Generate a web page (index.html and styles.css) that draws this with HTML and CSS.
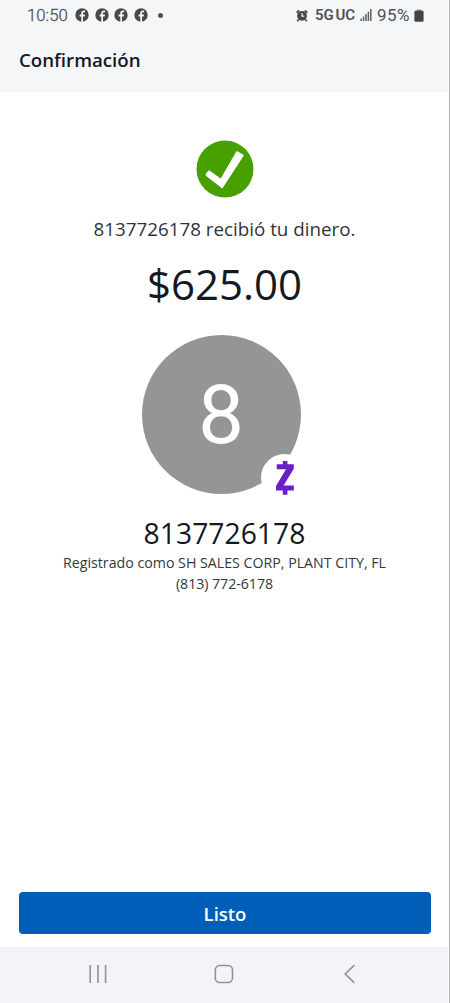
FILE: index.html
```html
<!DOCTYPE html>
<html lang="es">
<head>
<meta charset="utf-8">
<title>Confirmación</title>
<link rel="stylesheet" href="styles.css">
</head>
<body>
<svg class="defs" aria-hidden="true"><defs>
<symbol id="fb" viewBox="0 0 14 14"><circle cx="7" cy="7" r="6.7" fill="#48494b"/><path d="M6.3 14V8.5H4.6V6.5h1.7V5.2c0-1.8 1-2.7 2.6-2.7h1.2v1.8H9c-.7 0-1 .3-1 1v1.2h2L9.7 8.5H8V14z" fill="#f4f6f8"/></symbol>
</defs></svg>
<div class="screen">
  <header class="top">
    <div class="status">
      <div class="status-left">
        <span class="time">10:50</span>
        <svg class="fb"><use href="#fb"/></svg>
        <svg class="fb"><use href="#fb"/></svg>
        <svg class="fb"><use href="#fb"/></svg>
        <svg class="fb"><use href="#fb"/></svg>
        <span class="dot"></span>
      </div>
      <div class="status-right">
        <svg class="alarm" viewBox="0 0 12 13"><circle cx="6" cy="6.8" r="4.9" fill="#454648"/><path d="M.6 3.6 3.2 1.3M11.4 3.6 8.8 1.3M2.6 10.7 1.2 12.2M9.4 10.7l1.4 1.5" stroke="#454648" stroke-width="1.7"/><path d="M6 4v3.1h2.3" fill="none" stroke="#f4f6f8" stroke-width="1.2"/></svg>
        <span class="network">5G<span class="uc">UC</span></span>
        <svg class="signal" viewBox="0 0 12 12"><path d="M1.2 12V9.5M3.6 12V7.5M6 12V5M8.4 12V2.7M10.8 12V0" stroke="#606164" stroke-width="1.5"/></svg>
        <span class="percent">95%</span>
        <svg class="battery" viewBox="0 0 10 13"><path d="M3 .3h4V2H3z" fill="#a5a6a8"/><rect x=".4" y="1.5" width="9.2" height="11.2" rx="1.5" fill="#424345"/></svg>
      </div>
    </div>
    <h1 class="title">Confirmación</h1>
  </header>
  <main class="content">
    <svg class="check" viewBox="0 0 58 58"><circle cx="29" cy="29" r="28.5" fill="#489f00"/><path d="M10.6 34 13 31.2 25 39.6 41 12 47 15.4 26.2 47.4 10.6 35.4z" fill="#fff" stroke="#fff" stroke-width="1.6" stroke-linejoin="round"/></svg>
    <p class="message">8137726178 recibió tu dinero.</p>
    <p class="amount">$625.00</p>
    <div class="avatar">
      <span class="initial">8</span>
      <span class="zelle"><svg viewBox="0 0 18 34"><path d="M6.8 0h4.6v3.3h6.4v4.4L7.6 24.5h10.2v4.9h-6.4v4.3H6.8v-4.3H0v-4.3L10 8.2H.7V3.3h6.1z" fill="#6b1fc9"/></svg></span>
    </div>
    <h2 class="recipient">8137726178</h2>
    <p class="detail registered">Registrado como SH SALES CORP, PLANT CITY, FL</p>
    <p class="detail phone">(813) 772-6178</p>
  </main>
  <div class="actions"><button class="done">Listo</button></div>
  <nav class="navbar">
    <svg viewBox="0 0 20 20"><path d="M2.2 1v18M10 1v18M17.6 1v18" stroke="#929397" stroke-width="1.6"/></svg>
    <svg viewBox="0 0 20 20"><rect x="1.3" y="1.5" width="17.2" height="17" rx="4.6" fill="none" stroke="#929397" stroke-width="1.6"/></svg>
    <svg viewBox="0 0 20 20"><path d="M14.4 1.2 5.2 10l9.2 8.8" fill="none" stroke="#929397" stroke-width="1.6"/></svg>
  </nav>
</div>
</body>
</html>
```
FILE: styles.css
```css
* { box-sizing: border-box; }
body { margin: 0; font-family: "Open Sans", "Noto Sans", sans-serif; color: #14191f; background: #fff; }
h1, h2, p { margin: 0; font-weight: 400; white-space: nowrap; }
svg { display: block; flex: none; }
.defs { position: absolute; width: 0; height: 0; }
.screen { width: 450px; height: 1003px; display: flex; flex-direction: column; border-right: 1px solid #b0b1b3; overflow: hidden; }
.top { height: 92px; background: #f4f6f8; margin-right: 1px; }
.status { height: 30px; padding: 0 24px 0 27px; display: flex; justify-content: space-between; align-items: center; font-family: Roboto, sans-serif; color: #505154; }
.status-left, .status-right { display: flex; align-items: center; }
.time { width: 48px; font-size: 16.8px; line-height: 20px; font-weight: 300; -webkit-text-stroke: .3px #505154; }
.fb { width: 14px; height: 14px; margin-right: 5.5px; }
.dot { width: 5px; height: 5px; border-radius: 50%; background: #505154; margin-left: 5px; }
.alarm { width: 12px; height: 13px; margin-right: 7px; }
.network { width: 45px; font-size: 15px; font-weight: 600; line-height: 20px; letter-spacing: -.15px; }
.uc { margin-left: 2px; }
.signal { width: 12px; height: 12px; margin-right: 5px; }
.percent { width: 37px; font-size: 17px; line-height: 20px; letter-spacing: .5px; }
.battery { width: 10px; height: 13px; }
.title { padding: 17px 19px 0; font-size: 18.7px; line-height: 26px; font-weight: 600; }
.content { flex: 1; display: flex; flex-direction: column; align-items: center; padding-top: 48px; }
.check { width: 58px; height: 58px; }
.message { margin-top: 18px; font-size: 18.8px; line-height: 26px; color: #30343a; }
.amount { margin-top: 13px; font-size: 42px; line-height: 58px; }
.avatar { position: relative; width: 159px; height: 159px; margin: 22px 7px 0 0; border-radius: 50%; background: #959595; display: flex; align-items: center; justify-content: center; }
.initial { font-family: Roboto, sans-serif; font-size: 82px; line-height: 90px; color: #fff; }
.zelle { position: absolute; left: 119px; top: 119px; width: 47px; height: 47px; border-radius: 50%; background: #fff; }
.zelle svg { width: 18px; height: 34px; margin: 7px 0 0 15px; }
.recipient { margin-top: 20px; font-size: 28.3px; line-height: 38px; }
.detail { font-size: 14.2px; line-height: 20px; color: #34383d; }
.registered { margin-top: 1px; }
.phone { margin-top: 1px; letter-spacing: -.05px; }
.actions { padding: 0 18px 13px 19px; }
.done { display: block; width: 100%; height: 42px; border: 0; border-radius: 4px; background: #005eb8; color: #fff; font: 600 18.5px/42px "Open Sans", sans-serif; padding: 1px 0 0; }
.navbar { height: 56px; margin-right: 1px; padding: 0 88px 2px 88px; background: #f4f4f8; display: flex; align-items: center; justify-content: space-between; }
.navbar svg { width: 20px; height: 20px; }
```
